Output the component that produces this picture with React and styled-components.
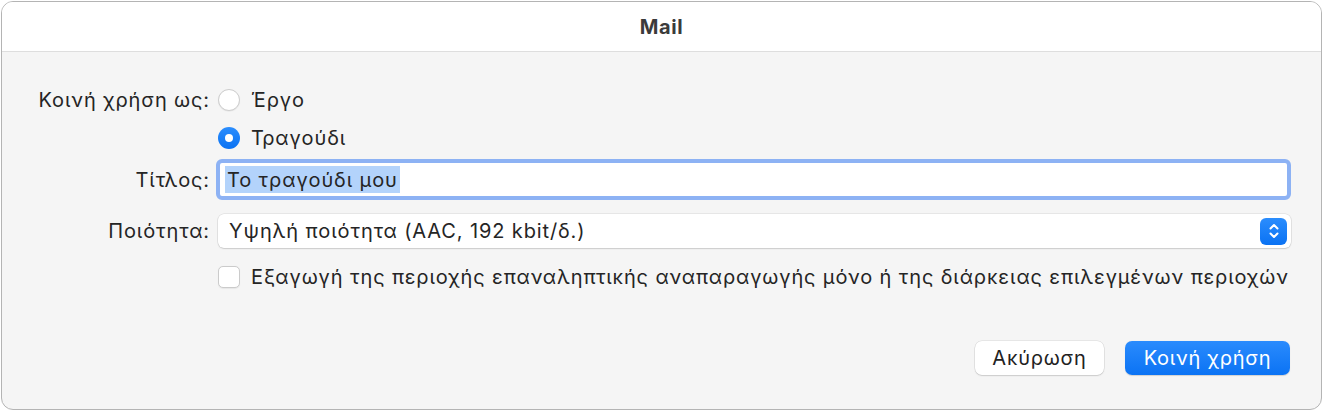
import styled, { createGlobalStyle } from "styled-components";

const Global = createGlobalStyle`
  html, body {
    margin: 0;
    background: #ffffff;
  }
  body {
    font-family: Inter, "Noto Sans", sans-serif;
    color: #252525;
  }
`;

function UpDown() {
  return (
    <svg width="12" height="18" viewBox="0 0 12 18" fill="none">
      <path d="M2.5 6.5 L6 3 L9.5 6.5" stroke="#fff" strokeWidth="2" strokeLinecap="round" strokeLinejoin="round" />
      <path d="M2.5 11.5 L6 15 L9.5 11.5" stroke="#fff" strokeWidth="2" strokeLinecap="round" strokeLinejoin="round" />
    </svg>
  );
}

function App() {
  return (
    <>
      <Global />
      <Sheet>
        <TitleBar>Mail</TitleBar>
        <Body>
          <Row $top={37}>
            <Label>Κοινή χρήση ως:</Label>
            <Choice>
              <Radio />
              <span>Έργο</span>
            </Choice>
          </Row>
          <Row $top={16}>
            <span />
            <Choice>
              <Radio $on />
              <span>Τραγούδι</span>
            </Choice>
          </Row>
          <Row $top={10}>
            <Label>Τίτλος:</Label>
            <Field>
              <Selected>Το τραγούδι μου</Selected>
            </Field>
          </Row>
          <Row $top={14}>
            <Label>Ποιότητα:</Label>
            <Popup>
              <span>Υψηλή ποιότητα (AAC, 192 kbit/δ.)</span>
              <Stepper>
                <UpDown />
              </Stepper>
            </Popup>
          </Row>
          <Row $top={18}>
            <span />
            <Choice>
              <Check />
              <span>Εξαγωγή της περιοχής επαναληπτικής αναπαραγωγής μόνο ή της διάρκειας επιλεγμένων περιοχών</span>
            </Choice>
          </Row>
          <Buttons>
            <Button>Ακύρωση</Button>
            <Button $primary>Κοινή χρήση</Button>
          </Buttons>
        </Body>
      </Sheet>
    </>
  );
}

const Sheet = styled.div`
  margin: 1px;
  width: 1321px;
  height: 409px;
  box-sizing: border-box;
  border: 1px solid #b4b4b4;
  border-radius: 12px;
  overflow: hidden;
  background: #f5f5f5;
  display: flex;
  flex-direction: column;
`;

const TitleBar = styled.div`
  height: 49px;
  flex: none;
  background: #ffffff;
  border-bottom: 1px solid #dedede;
  display: flex;
  align-items: center;
  justify-content: center;
  font-size: 20px;
  font-weight: 700;
  letter-spacing: 0.6px;
  color: #3b3b3b;
`;

const Body = styled.div`
  display: flex;
  flex-direction: column;
  padding-right: 30px;
  font-size: 20px;
  line-height: 22px;
  letter-spacing: 0.88px;
`;

const Row = styled.div`
  display: grid;
  grid-template-columns: 208px 1fr;
  column-gap: 6px;
  align-items: center;
  margin-top: ${(p) => p.$top}px;
`;

const Label = styled.div`
  text-align: right;
  white-space: nowrap;
`;

const Choice = styled.label`
  display: flex;
  align-items: center;
  gap: 11px;
  padding-left: 2px;
  height: 22px;
  white-space: nowrap;
`;

const Radio = styled.span`
  width: 22px;
  height: 22px;
  box-sizing: border-box;
  border-radius: 50%;
  flex: none;
  position: relative;
  background: ${(p) => (p.$on ? "linear-gradient(#2b8dfd, #0a72f3)" : "#ffffff")};
  border: ${(p) => (p.$on ? "none" : "1px solid #cdcdcd")};
  box-shadow: ${(p) => (p.$on ? "none" : "0 0.5px 1px rgba(0,0,0,0.08)")};

  &::after {
    content: "";
    display: ${(p) => (p.$on ? "block" : "none")};
    position: absolute;
    left: 7px;
    top: 7px;
    width: 8px;
    height: 8px;
    border-radius: 50%;
    background: #ffffff;
  }
`;

const Check = styled.span`
  width: 22px;
  height: 22px;
  box-sizing: border-box;
  flex: none;
  border-radius: 5px;
  background: #ffffff;
  border: 1px solid #cbcbcb;
  box-shadow: 0 0.5px 1px rgba(0, 0, 0, 0.06);
`;

const Field = styled.div`
  height: 41px;
  box-sizing: border-box;
  border: 4px solid #8db2f4;
  border-radius: 6px;
  background: #ffffff;
  display: flex;
  align-items: center;
  padding-left: 5px;
`;

const Selected = styled.span`
  background: #b3d3fb;
  padding: 3px 2px 2px;
  line-height: 22px;
`;

const Popup = styled.div`
  height: 34px;
  margin-left: 2px;
  box-sizing: border-box;
  border-radius: 6px;
  background: #ffffff;
  box-shadow: 0 0 0 0.5px rgba(0, 0, 0, 0.12), 0 1px 1.5px rgba(0, 0, 0, 0.12);
  display: flex;
  align-items: center;
  justify-content: space-between;
  padding: 0 4px 0 11px;
`;

const Stepper = styled.div`
  width: 27px;
  height: 27px;
  border-radius: 6px;
  background: linear-gradient(#2b8dfd, #0a72f3);
  display: flex;
  align-items: center;
  justify-content: center;
`;

const Buttons = styled.div`
  display: flex;
  justify-content: flex-end;
  gap: 21px;
  margin-top: 53px;
  padding-right: 1px;
`;

const Button = styled.button`
  height: 34px;
  min-width: ${(p) => (p.$primary ? "165px" : "129px")};
  box-sizing: border-box;
  border: none;
  border-radius: 7px;
  font-family: inherit;
  font-size: 20px;
  letter-spacing: 0.75px;
  padding: 0 16px;
  color: ${(p) => (p.$primary ? "#ffffff" : "#222222")};
  background: ${(p) => (p.$primary ? "linear-gradient(#2a8bfd, #0b73f4)" : "#ffffff")};
  box-shadow: ${(p) =>
    p.$primary
      ? "0 0.5px 1px rgba(0,0,0,0.15)"
      : "0 0 0 0.5px rgba(0,0,0,0.12), 0 1px 1.5px rgba(0,0,0,0.12)"};
`;

export default App;
